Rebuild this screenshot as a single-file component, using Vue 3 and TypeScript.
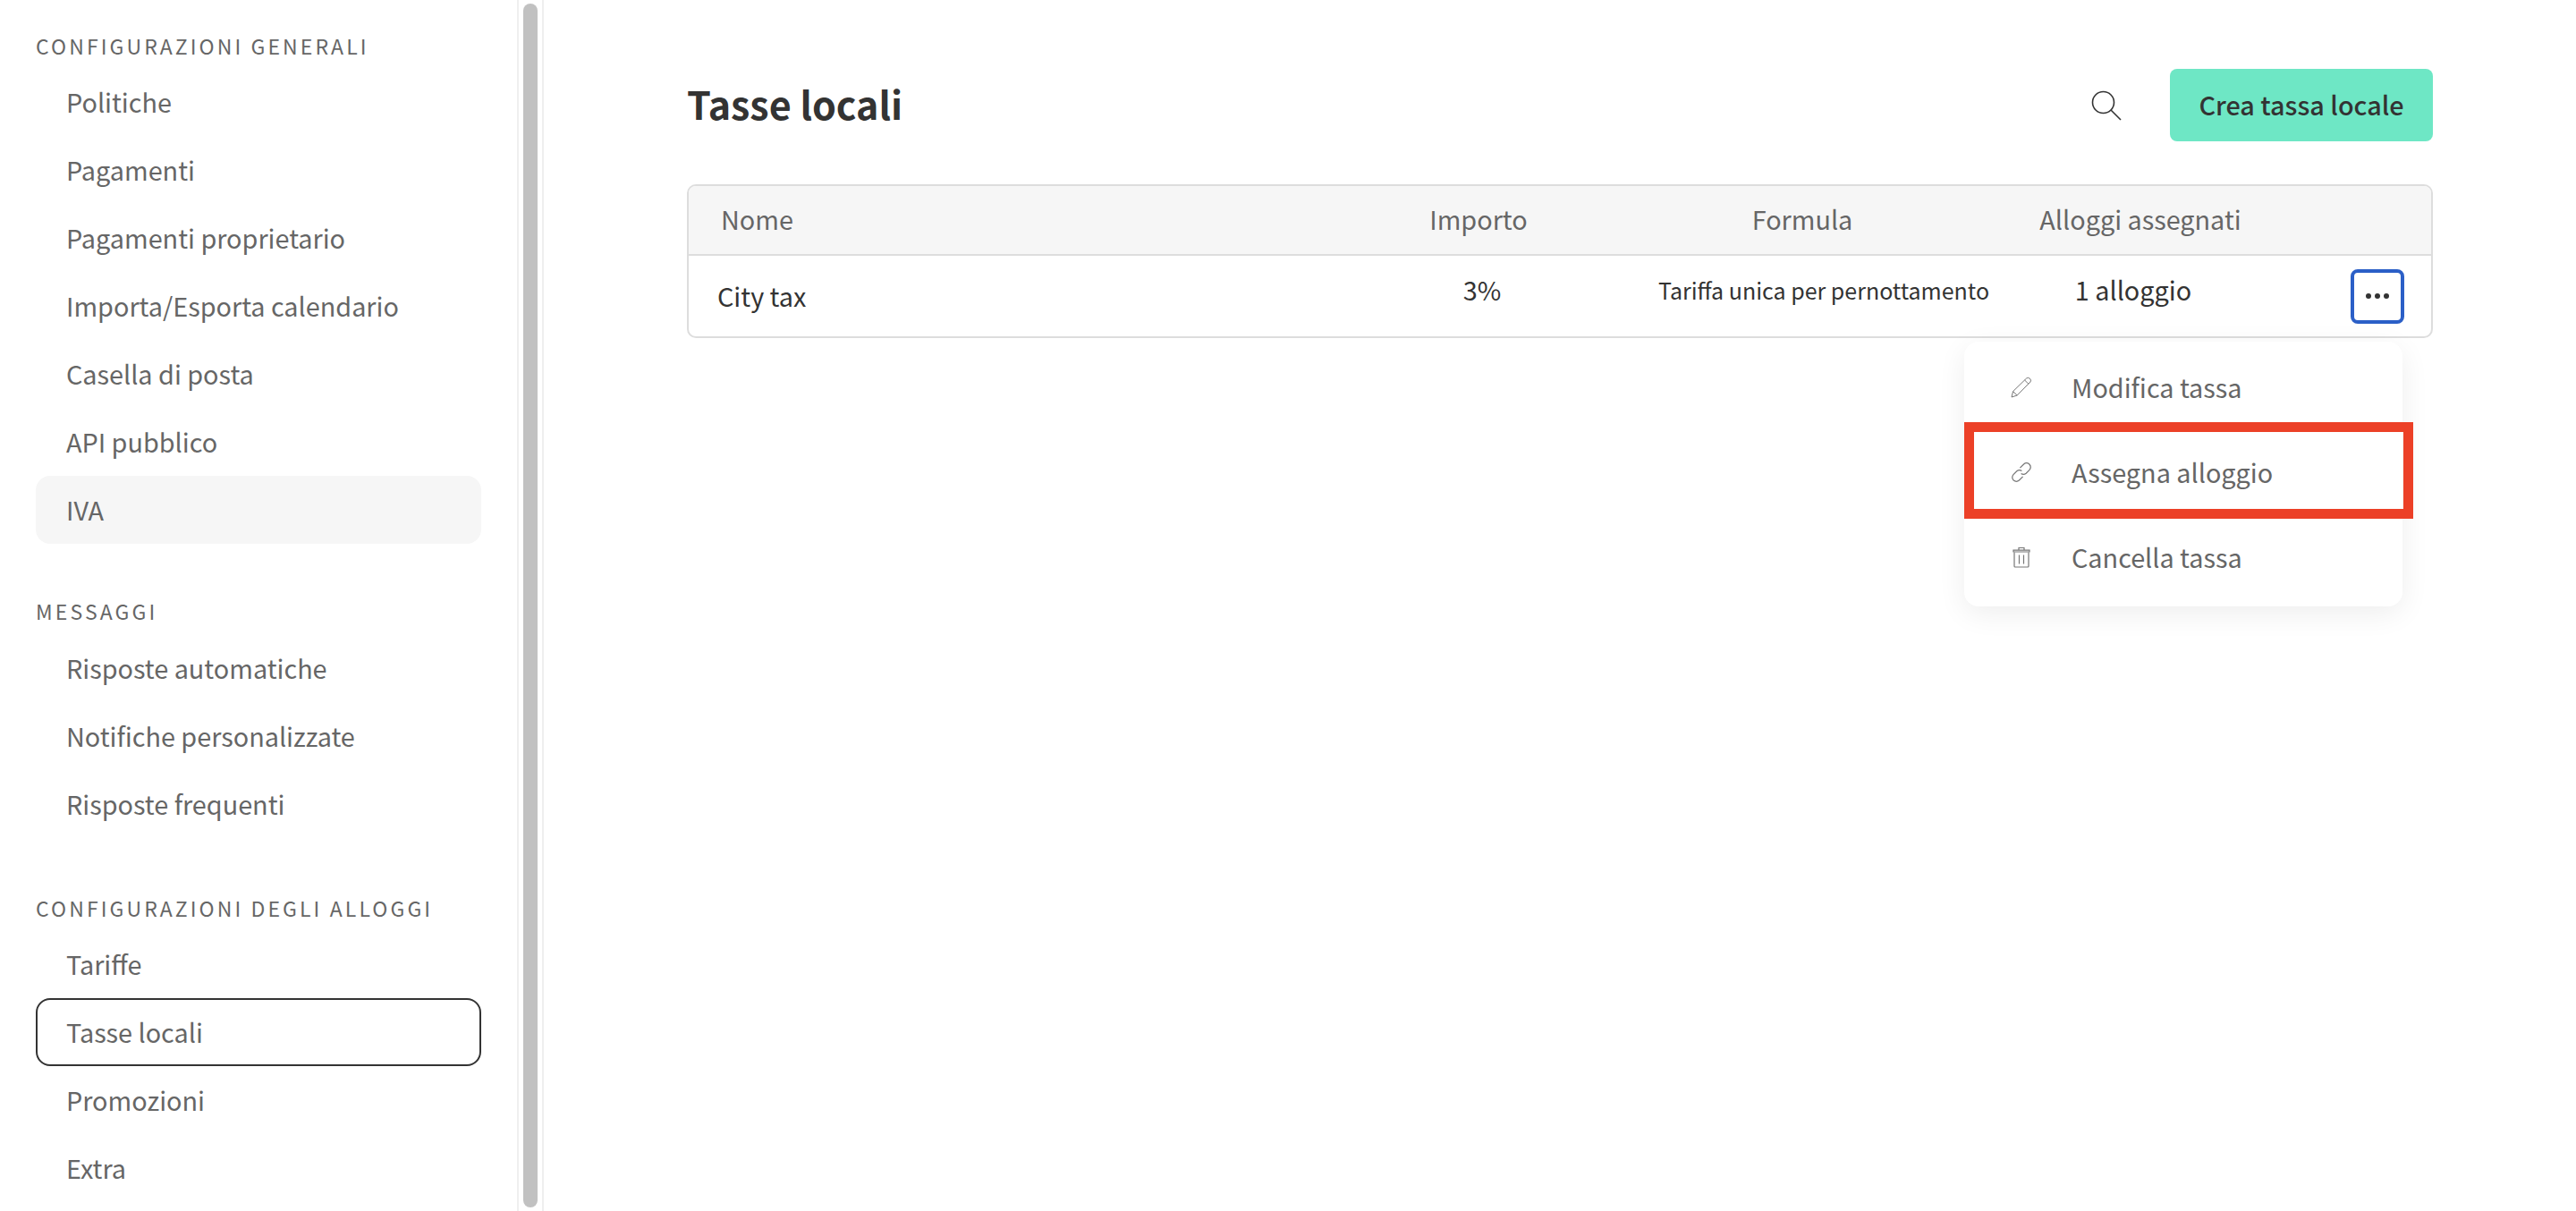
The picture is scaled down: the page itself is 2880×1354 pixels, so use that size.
<script setup lang="ts">
interface Group { title: string; items: string[] }
const groups: Group[] = [
  { title: 'CONFIGURAZIONI GENERALI', items: ['Politiche', 'Pagamenti', 'Pagamenti proprietario', 'Importa/Esporta calendario', 'Casella di posta', 'API pubblico', 'IVA'] },
  { title: 'MESSAGGI', items: ['Risposte automatiche', 'Notifiche personalizzate', 'Risposte frequenti'] },
  { title: 'CONFIGURAZIONI DEGLI ALLOGGI', items: ['Tariffe', 'Tasse locali', 'Promozioni', 'Extra'] },
]
</script>

<template>
  <div class="page">
    <aside class="sidebar">
      <nav class="nav">
        <section v-for="g in groups" :key="g.title" class="group">
          <h3 class="group-title">{{ g.title }}</h3>
          <a
            v-for="item in g.items"
            :key="item"
            class="item"
            :class="{ hover: item === 'IVA', active: item === 'Tasse locali' }"
          >{{ item }}</a>
        </section>
      </nav>
      <div class="track"><div class="thumb"></div></div>
    </aside>

    <main class="main">
      <header class="head">
        <h1 class="title">Tasse locali</h1>
        <svg class="search" viewBox="0 0 34 34" fill="none" stroke="#333" stroke-width="1.6">
          <circle cx="13.5" cy="13.5" r="12" />
          <path d="M22 22 L33 33" />
        </svg>
        <button class="create">Crea tassa locale</button>
      </header>

      <div class="table">
        <div class="thead">
          <div class="th name">Nome</div>
          <div class="th">Importo</div>
          <div class="th">Formula</div>
          <div class="th">Alloggi assegnati</div>
        </div>
        <div class="tbody">
          <div class="td name">City tax</div>
          <div class="td raised">3%</div>
          <div class="td raised small">Tariffa unica per pernottamento</div>
          <div class="td raised">1 alloggio</div>
          <div class="action">
            <button class="dots"><i></i><i></i><i></i></button>
          </div>
        </div>

        <div class="menu">
          <div class="menu-item">
            <svg class="icon" viewBox="0 0 24 24" fill="none" stroke="#777" stroke-width="1">
              <path d="M1 23 L2.6 16.6 L17.6 2 Q19.4 0.6 21.4 2.2 Q23.4 4.2 22 6 L7.2 21 Z" />
              <path d="M2.6 16.6 L7.2 21 M15.6 4 L20 8.4" />
            </svg>
            <span>Modifica tassa</span>
          </div>
          <div class="menu-item marked">
            <svg class="icon" viewBox="0 0 24 24" fill="none" stroke="#777" stroke-width="1.2">
              <path d="M10.4 7.2 L14.6 3 Q17.6 0.4 20.8 3 Q23.6 6.2 21 9.4 L17.2 13.2 Q14.4 15.4 11.6 13.4" />
              <path d="M13.6 16.8 L9.4 21 Q6.4 23.6 3.2 21 Q0.4 17.8 3 14.6 L6.8 10.8 Q9.6 8.6 12.4 10.6" />
            </svg>
            <span>Assegna alloggio</span>
          </div>
          <div class="menu-item">
            <svg class="icon" viewBox="0 0 24 24" fill="none" stroke="#777" stroke-width="1.2">
              <path d="M4 6.5 V22 Q4 23 5 23 H19 Q20 23 20 22 V6.5" />
              <path d="M3 6 V4.2 H21 V6 Z M9 4 V1.5 H15 V4" />
              <path d="M9.5 9.5 V19.5 M14.5 9.5 V19.5" />
            </svg>
            <span>Cancella tassa</span>
          </div>
        </div>
      </div>
    </main>
  </div>
</template>

<style>
html, body { margin: 0; background: #fff; }
</style>

<style scoped>
.page {
  display: flex;
  width: 2880px;
  height: 1354px;
  overflow: hidden;
  background: #fff;
  font-family: "Noto Sans CJK SC", "Noto Sans", sans-serif;
  color: #333;
}
.sidebar {
  display: flex;
  flex: none;
  width: 608px;
  height: 100%;
}
.nav {
  flex: none;
  width: 578px;
  padding: 32px 40px 0;
  box-sizing: border-box;
}
.group { margin-bottom: 56px; }
.group:nth-child(2) { margin-bottom: 59px; }
.group:nth-child(2) .group-title { height: 45px; }
.group-title {
  margin: 0;
  height: 44px;
  line-height: 38px;
  font-size: 23px;
  font-weight: 400;
  letter-spacing: 3.1px;
  color: #666;
}
.item {
  display: block;
  box-sizing: border-box;
  width: 498px;
  height: 76px;
  line-height: 76px;
  padding-left: 34px;
  font-size: 28.8px;
  color: #666;
  border-radius: 16px;
}
.item.hover { background: #f6f6f6; }
.item.active {
  line-height: 72px;
  border: 2px solid #333;
  padding-left: 32px;
}
.track {
  flex: none;
  width: 30px;
  box-sizing: border-box;
  border-left: 2px solid #efefef;
  border-right: 2px solid #efefef;
  padding: 4px 5px;
}
.thumb {
  width: 16px;
  height: 1346px;
  border-radius: 8px;
  background: #c1c1c1;
}
.main {
  flex: 1;
  padding: 77px 160px 0;
  min-width: 0;
}
.head {
  display: flex;
  align-items: center;
  height: 81px;
  margin-bottom: 48px;
}
.title {
  flex: 1;
  margin: 0;
  padding-bottom: 5px;
  font-size: 43px;
  line-height: 76px;
  font-weight: 700;
  color: #333;
}
.search {
  width: 34px;
  height: 34px;
  margin-right: 54px;
}
.create {
  width: 294px;
  height: 81px;
  border: none;
  border-radius: 8px;
  background: #6ee7c5;
  font: 500 28.8px "Noto Sans CJK SC", sans-serif;
  color: #333;
  padding: 0 0 2px;
}
.table {
  position: relative;
  border: 2px solid #ddd;
  border-radius: 10px;
}
.thead, .tbody { display: grid; align-items: center; }
.thead {
  grid-template-columns: 730px 306px 418px 338px 156px;
  height: 76px;
  background: #f6f6f6;
  border-bottom: 2px solid #ddd;
  border-radius: 8px 8px 0 0;
}
.th {
  text-align: center;
  font-size: 28.8px;
  line-height: 40px;
  padding-bottom: 2px;
  color: #666;
}
.th.name { text-align: left; padding-left: 36px; }
.tbody {
  grid-template-columns: 730px 314px 450px 242px 212px;
  height: 90px;
}
.td {
  text-align: center;
  font-size: 28.8px;
  line-height: 40px;
  color: #333;
}
.td.name { text-align: left; padding-left: 32px; }
.td.raised { padding-bottom: 14px; }
.td.small { font-size: 25px; }
.action { display: flex; justify-content: flex-end; padding-right: 30px; }
.dots {
  display: flex;
  align-items: center;
  justify-content: center;
  gap: 4px;
  box-sizing: border-box;
  width: 60px;
  height: 61px;
  padding: 0;
  border: 4px solid #2b5fc7;
  border-radius: 8px;
  background: #fff;
}
.dots i {
  width: 6px;
  height: 6px;
  border-radius: 50%;
  background: #333;
}
.menu {
  position: absolute;
  top: 174px;
  right: 32px;
  width: 490px;
  padding: 3px 0 8px;
  border-radius: 16px;
  background: #fff;
  box-shadow: 0 8px 32px rgba(0, 0, 0, 0.07);
}
.menu-item {
  position: relative;
  display: flex;
  align-items: center;
  height: 95px;
  font-size: 28.8px;
  color: #666;
}
.icon {
  flex: none;
  width: 24px;
  height: 24px;
  margin: 0 44px 0 52px;
}
.marked::after {
  content: "";
  position: absolute;
  left: 0;
  right: -12px;
  top: -8px;
  bottom: -5px;
  border: 11px solid #ec4027;
  pointer-events: none;
}
</style>
